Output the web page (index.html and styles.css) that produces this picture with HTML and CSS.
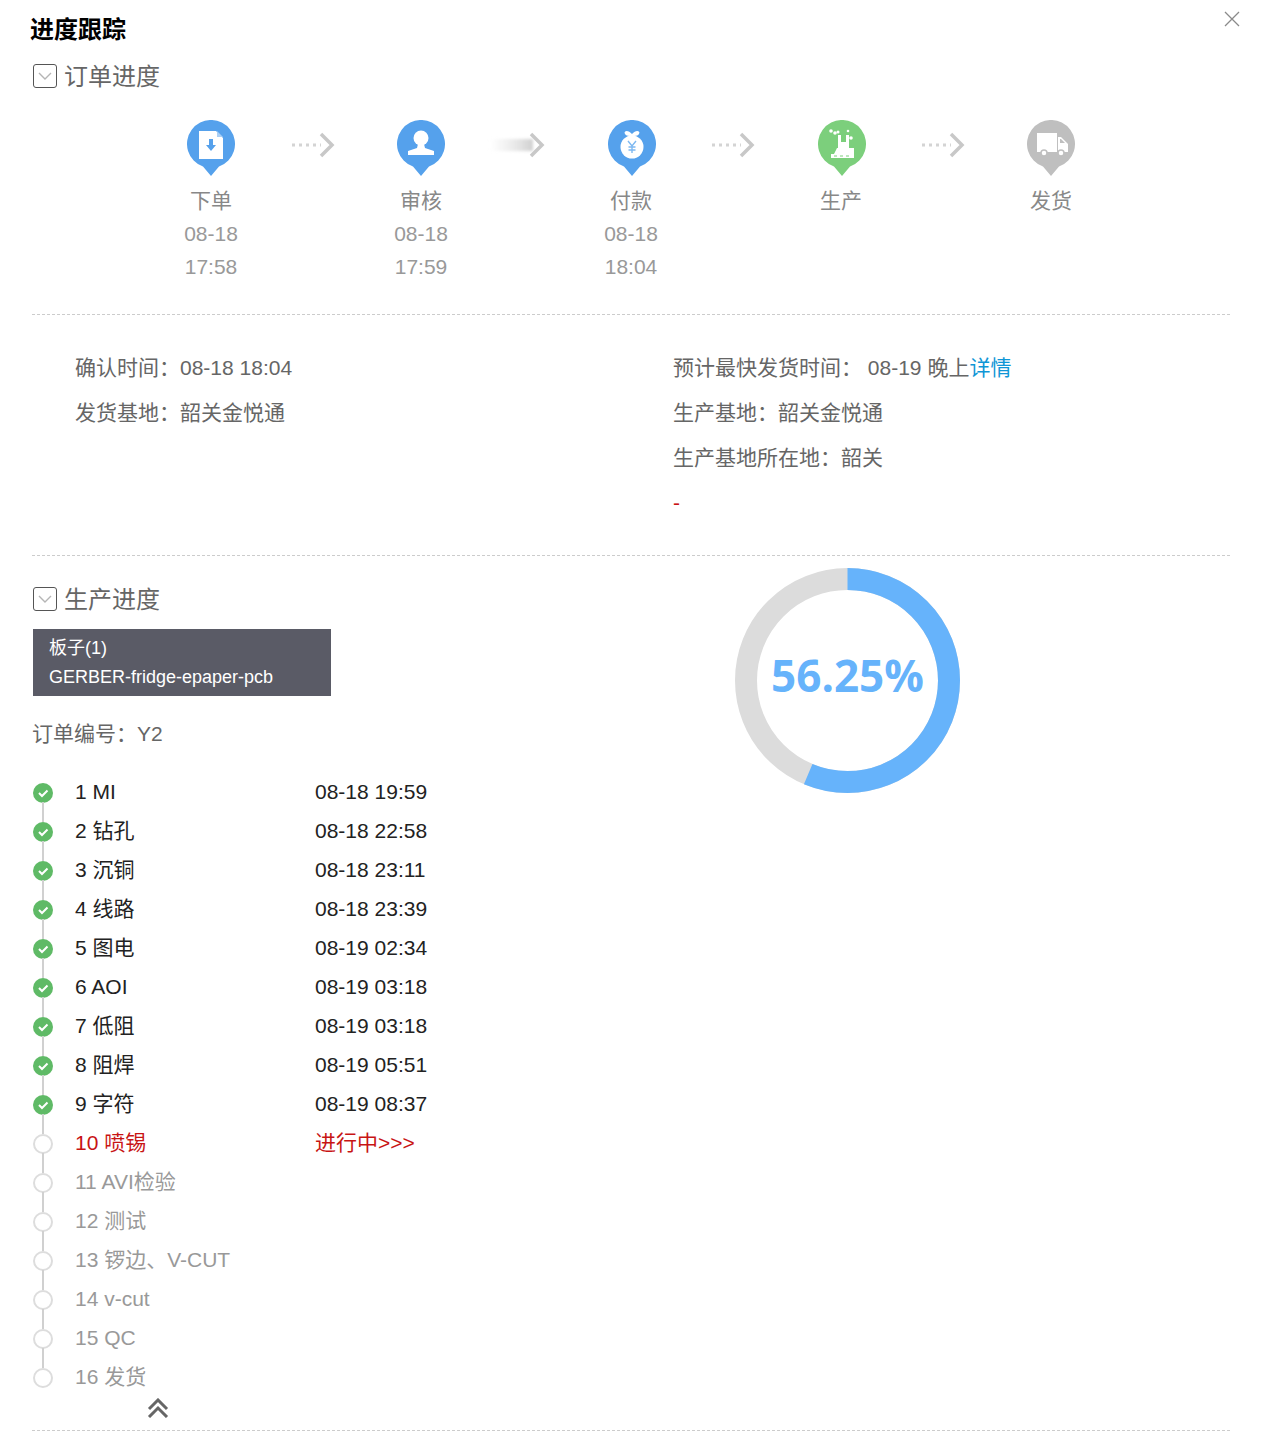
FILE: index.html
```html
<!DOCTYPE html>
<html lang="zh-CN">
<head>
    <meta charset="UTF-8">
    <meta name="viewport" content="width=device-width, initial-scale=1.0">
    <title>进度跟踪</title>
    <link rel="stylesheet" href="styles.css">
</head>
<body>
    <div class="dialog">
        <svg class="close" width="16" height="16" viewBox="0 0 16 16"><path d="M1 1L15 15M15 1L1 15" stroke="#8a8a8a" stroke-width="1.3" fill="none"/></svg>
        <h1 class="title">进度跟踪</h1>

        <div class="head">
            <span class="toggle"><svg width="14" height="8" viewBox="0 0 14 8"><path d="M1 1L7 7L13 1" stroke="#b5b5b5" stroke-width="1.4" fill="none"/></svg></span>
            <span>订单进度</span>
        </div>

        <div class="steps">
            <div class="step">
                <svg class="pin" width="48" height="56" viewBox="0 0 48 56">
                    <path d="M24 56L16 46.6A24 24 0 1 1 32 46.6Z" fill="#55a1ec"/>
                    <path d="M12 11H29L36 18V39H12Z" fill="#fff"/>
                    <path d="M30 11L36 17H30Z" fill="#a9cff5"/>
                    <path d="M22 19H26V25H29L24 31L19 25H22Z" fill="#55a1ec"/>
                </svg>
                <div class="step-name">下单</div>
                <div>08-18</div>
                <div>17:58</div>
            </div>
            <div class="arrow">
                <svg width="44" height="28" viewBox="0 0 44 28"><path d="M1 14H30" stroke="#d4d4d4" stroke-width="3" stroke-dasharray="3 4" fill="none"/><path d="M30 3L41 14L30 25" stroke="#c8c8c8" stroke-width="3.5" fill="none"/></svg>
            </div>
            <div class="step">
                <svg class="pin" width="48" height="56" viewBox="0 0 48 56">
                    <path d="M24 56L16 46.6A24 24 0 1 1 32 46.6Z" fill="#55a1ec"/>
                    <circle cx="24" cy="18" r="7.500" fill="#fff"/>
                    <path d="M21 24H27L28 28L37 31V35H11V31L20 28Z" fill="#fff"/>
                </svg>
                <div class="step-name">审核</div>
                <div>08-18</div>
                <div>17:59</div>
            </div>
            <div class="arrow">
                <svg class="arrow-moving" width="44" height="28" viewBox="0 0 44 28">
                    <defs>
                        <linearGradient id="fade" x1="0" y1="0" x2="1" y2="0"><stop offset="0" stop-color="#e4e4e4" stop-opacity="0"/><stop offset="1" stop-color="#d0d0d0"/></linearGradient>
                        <filter id="soft" x="-20%" y="-100%" width="140%" height="300%"><feGaussianBlur stdDeviation="1.500"/></filter>
                    </defs>
                    <rect x="-12" y="8" width="44" height="12" fill="url(#fade)" filter="url(#soft)"/>
                    <path d="M30 3L41 14L30 25" stroke="#c8c8c8" stroke-width="3.5" fill="none"/>
                </svg>
            </div>
            <div class="step">
                <svg class="pin pin-shift" width="48" height="56" viewBox="0 0 48 56">
                    <path d="M24 56L16 46.6A24 24 0 1 1 32 46.6Z" fill="#55a1ec"/>
                    <path d="M24 14C20 9 15 11 17 14C18 16 21 16 24 16C27 16 30 16 31 14C33 11 28 9 24 14Z" fill="#fff"/>
                    <circle cx="24" cy="27" r="11.500" fill="#fff"/>
                    <path d="M20 21L24 26L28 21M24 26V33M20.500 27H27.500M20.500 30H27.500" stroke="#7db8f1" stroke-width="1.400" fill="none"/>
                </svg>
                <div class="step-name">付款</div>
                <div>08-18</div>
                <div>18:04</div>
            </div>
            <div class="arrow">
                <svg width="44" height="28" viewBox="0 0 44 28"><path d="M1 14H30" stroke="#d4d4d4" stroke-width="3" stroke-dasharray="3 4" fill="none"/><path d="M30 3L41 14L30 25" stroke="#c8c8c8" stroke-width="3.5" fill="none"/></svg>
            </div>
            <div class="step">
                <svg class="pin pin-shift" width="48" height="56" viewBox="0 0 48 56">
                    <path d="M24 56L16 46.6A24 24 0 1 1 32 46.6Z" fill="#7ccf7c"/>
                    <path d="M20 15H23V22H28V15H31V28H36V38H13V34H16L19 28H20Z" fill="#fff"/>
                    <circle cx="13" cy="11" r="1.800" fill="#fff"/><circle cx="17" cy="13" r="1.800" fill="#fff"/><circle cx="20" cy="12" r="1.500" fill="#fff"/>
                    <circle cx="33" cy="18" r="1.800" fill="#fff"/><circle cx="30" cy="11" r="1.300" fill="#fff"/>
                    <path d="M16 36H34" stroke="#7ccf7c" stroke-width="1" stroke-dasharray="3 3"/>
                </svg>
                <div class="step-name">生产</div>
            </div>
            <div class="arrow">
                <svg width="44" height="28" viewBox="0 0 44 28"><path d="M1 14H30" stroke="#d4d4d4" stroke-width="3" stroke-dasharray="3 4" fill="none"/><path d="M30 3L41 14L30 25" stroke="#c8c8c8" stroke-width="3.5" fill="none"/></svg>
            </div>
            <div class="step">
                <svg class="pin" width="48" height="56" viewBox="0 0 48 56">
                    <path d="M24 56L16 46.6A24 24 0 1 1 32 46.6Z" fill="#bfbfbf"/>
                    <rect x="10" y="13" width="20" height="19" fill="#fff"/>
                    <path d="M31 17H34L41 24V32H31Z" fill="#fff"/>
                    <path d="M33 19H34L38 23H33Z" fill="#bfbfbf"/>
                    <circle cx="17" cy="33" r="3" fill="#fff" stroke="#bfbfbf" stroke-width="1.500"/>
                    <circle cx="34" cy="33" r="3" fill="#fff" stroke="#bfbfbf" stroke-width="1.500"/>
                </svg>
                <div class="step-name">发货</div>
            </div>
        </div>

        <div class="info">
            <div class="info-col info-left">
                <div>确认时间&#65306;08-18 18:04</div>
                <div>发货基地&#65306;韶关金悦通</div>
            </div>
            <div class="info-col">
                <div>预计最快发货时间&#65306; 08-19 晚上<a class="link">详情</a></div>
                <div>生产基地&#65306;韶关金悦通</div>
                <div>生产基地所在地&#65306;韶关</div>
                <div class="red">-</div>
            </div>
        </div>

        <div class="prod">
            <div class="prod-left">
                <div class="head">
                    <span class="toggle"><svg width="14" height="8" viewBox="0 0 14 8"><path d="M1 1L7 7L13 1" stroke="#b5b5b5" stroke-width="1.4" fill="none"/></svg></span>
                    <span>生产进度</span>
                </div>
                <div class="board">
                    <div>板子(1)</div>
                    <div>GERBER-fridge-epaper-pcb</div>
                </div>
                <div class="order-no">订单编号&#65306;Y2</div>
                <ul class="flow">
                    <li class="done"><span class="dot"><svg width="20" height="20" viewBox="0 0 20 20"><path d="M6 10L9 13L14.500 7.500" stroke="#fff" stroke-width="2" fill="none"/></svg></span><span class="flow-name">1 MI</span><span>08-18 19:59</span></li>
                    <li class="done"><span class="dot"><svg width="20" height="20" viewBox="0 0 20 20"><path d="M6 10L9 13L14.500 7.500" stroke="#fff" stroke-width="2" fill="none"/></svg></span><span class="flow-name">2 钻孔</span><span>08-18 22:58</span></li>
                    <li class="done"><span class="dot"><svg width="20" height="20" viewBox="0 0 20 20"><path d="M6 10L9 13L14.500 7.500" stroke="#fff" stroke-width="2" fill="none"/></svg></span><span class="flow-name">3 沉铜</span><span>08-18 23:11</span></li>
                    <li class="done"><span class="dot"><svg width="20" height="20" viewBox="0 0 20 20"><path d="M6 10L9 13L14.500 7.500" stroke="#fff" stroke-width="2" fill="none"/></svg></span><span class="flow-name">4 线路</span><span>08-18 23:39</span></li>
                    <li class="done"><span class="dot"><svg width="20" height="20" viewBox="0 0 20 20"><path d="M6 10L9 13L14.500 7.500" stroke="#fff" stroke-width="2" fill="none"/></svg></span><span class="flow-name">5 图电</span><span>08-19 02:34</span></li>
                    <li class="done"><span class="dot"><svg width="20" height="20" viewBox="0 0 20 20"><path d="M6 10L9 13L14.500 7.500" stroke="#fff" stroke-width="2" fill="none"/></svg></span><span class="flow-name">6 AOI</span><span>08-19 03:18</span></li>
                    <li class="done"><span class="dot"><svg width="20" height="20" viewBox="0 0 20 20"><path d="M6 10L9 13L14.500 7.500" stroke="#fff" stroke-width="2" fill="none"/></svg></span><span class="flow-name">7 低阻</span><span>08-19 03:18</span></li>
                    <li class="done"><span class="dot"><svg width="20" height="20" viewBox="0 0 20 20"><path d="M6 10L9 13L14.500 7.500" stroke="#fff" stroke-width="2" fill="none"/></svg></span><span class="flow-name">8 阻焊</span><span>08-19 05:51</span></li>
                    <li class="done"><span class="dot"><svg width="20" height="20" viewBox="0 0 20 20"><path d="M6 10L9 13L14.500 7.500" stroke="#fff" stroke-width="2" fill="none"/></svg></span><span class="flow-name">9 字符</span><span>08-19 08:37</span></li>
                    <li class="current"><span class="dot"></span><span class="flow-name">10 喷锡</span><span>进行中&gt;&gt;&gt;</span></li>
                    <li><span class="dot"></span><span class="flow-name">11 AVI检验</span></li>
                    <li><span class="dot"></span><span class="flow-name">12 测试</span></li>
                    <li><span class="dot"></span><span class="flow-name">13 锣边、V-CUT</span></li>
                    <li><span class="dot"></span><span class="flow-name">14 v-cut</span></li>
                    <li><span class="dot"></span><span class="flow-name">15 QC</span></li>
                    <li><span class="dot"></span><span class="flow-name">16 发货</span></li>
                </ul>
                <div class="collapse">
                    <svg width="22" height="20" viewBox="0 0 22 20"><path d="M2 11L11 2L20 11M2 19L11 10L20 19" stroke="#666" stroke-width="3" fill="none"/></svg>
                </div>
            </div>
            <svg class="donut" width="225" height="225" viewBox="0 0 225 225">
                <circle cx="112.500" cy="112.500" r="101.500" fill="none" stroke="#dcdcdc" stroke-width="22"/>
                <circle cx="112.500" cy="112.500" r="101.500" fill="none" stroke="#66b3fb" stroke-width="22" stroke-dasharray="358.700 1000" transform="rotate(-90 112.500 112.500)"/>
                <text class="donut-text" x="112.500" y="123.500" text-anchor="middle">56.25%</text>
            </svg>
        </div>
    </div>
</body>
</html>
```

FILE: styles.css
```css
html, body {
    margin: 0;
    padding: 0;
    background: #fff;
}

body {
    font-family: "Liberation Sans", "Noto Sans CJK SC", sans-serif;
    font-size: 21px;
    color: #666;
}

.dialog {
    position: relative;
    padding: 0 31px 0 32px;
}

.close {
    position: absolute;
    top: 11px;
    right: 21px;
}

.title {
    margin: 0;
    padding-top: 1px;
    height: 57px;
    font-size: 24px;
    line-height: 58px;
    font-weight: bold;
    color: #000;
    text-indent: -2px;
}

.head {
    display: flex;
    align-items: flex-start;
    height: 36px;
    padding-left: 1px;
    font-size: 24px;
    line-height: 38px;
    color: #666;
}

.toggle {
    display: flex;
    align-items: center;
    justify-content: center;
    box-sizing: border-box;
    width: 24px;
    height: 24px;
    margin: 6px 7px 0 0;
    border: 1px solid #555;
    border-radius: 3px;
}

.steps {
    display: flex;
    padding: 26px 0 31px 137px;
    border-bottom: 1px dashed #ccc;
}

.step {
    width: 84px;
    text-align: center;
    line-height: 33px;
    color: #999;
    height: 163px;
}

.pin {
    display: block;
    margin: 0 auto 8px;
}

.pin-shift {
    margin-left: 19px;
}

.step-name {
    color: #888;
}

.arrow {
    width: 126px;
    height: 50px;
    box-sizing: border-box;
    padding: 11px 0 0 38px;
}

.arrow svg {
    display: block;
}

.arrow .arrow-moving {
    overflow: visible;
}

.info {
    display: flex;
    padding: 30px 0;
    border-bottom: 1px dashed #ccc;
    line-height: 45px;
}

.info-col {
    flex: 1;
}

.info-left {
    flex: none;
    box-sizing: border-box;
    width: 641px;
    padding-left: 43px;
}

.link {
    color: #0f96d6;
}

.red {
    color: #c81414;
}

.prod {
    display: flex;
    align-items: flex-start;
    padding-top: 25px;
    border-bottom: 1px dashed #ccc;
}

.prod-left {
    width: 703px;
}

.board {
    box-sizing: border-box;
    width: 298px;
    height: 67px;
    margin: 12px 0 0 1px;
    padding: 5px 16px 0;
    background: #5a5b66;
    color: #fff;
    font-size: 18px;
    line-height: 29px;
}

.order-no {
    margin-top: 16px;
    line-height: 44px;
    height: 45px;
}

.flow {
    list-style: none;
    margin: 16px 0 0;
    padding: 0;
}

.flow li {
    position: relative;
    display: flex;
    align-items: flex-start;
    height: 39px;
    padding-left: 1px;
    line-height: 37px;
    color: #999;
}

.flow li.done {
    color: #222;
}

.flow li.current {
    color: #c81414;
}

.flow li::after {
    content: "";
    position: absolute;
    left: 10px;
    top: 29px;
    width: 2px;
    height: 20px;
    background: #d0d0d0;
}

.flow li:last-child::after {
    display: none;
}

.dot {
    box-sizing: border-box;
    flex: none;
    width: 20px;
    height: 20px;
    margin: 10px 22px 0 0;
    border: 2px solid #ddd;
    border-radius: 50%;
    background: #fff;
}

.done .dot {
    border: none;
    background: #5fba66;
}

.dot svg {
    display: block;
}

.flow-name {
    width: 240px;
}

.collapse {
    display: flex;
    justify-content: center;
    align-items: flex-start;
    width: 252px;
    height: 32px;
    padding-top: 1px;
}

.donut {
    display: block;
    flex: none;
    margin-top: -13px;
}

.donut-text {
    font-family: "Open Sans", sans-serif;
    font-size: 44px;
    font-weight: bold;
    fill: #66b3fb;
}
```
